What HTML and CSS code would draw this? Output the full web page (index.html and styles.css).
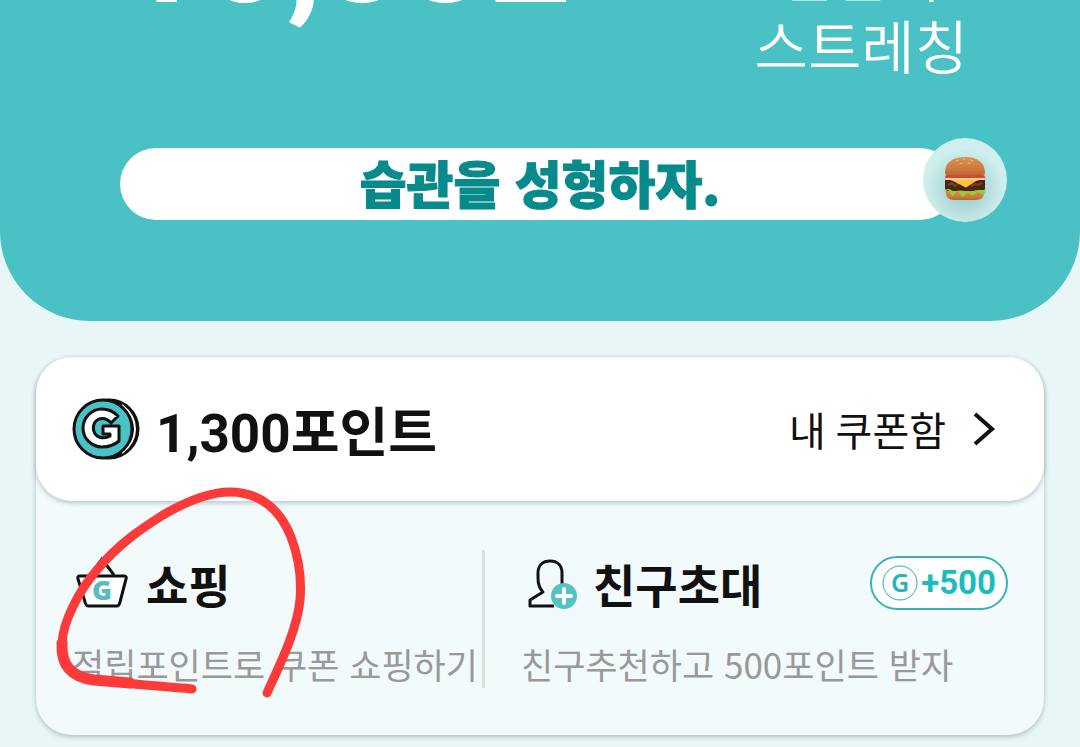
FILE: index.html
```html
<!DOCTYPE html>
<html lang="ko">
<head>
<meta charset="utf-8">
<meta name="viewport" content="width=device-width, initial-scale=1">
<title>습관을 성형하자.</title>
<link rel="stylesheet" href="styles.css">
</head>
<body>
<header class="hero">
  <div class="stats">
    <p class="count">10,332</p>
    <p class="workout">간단히<br>스트레칭</p>
  </div>
  <div class="slogan">
    <h1 class="slogan-text">습관을 성형하자.</h1>
    <span class="burger">
      <svg viewBox="0 0 42 46" width="42" height="46" aria-hidden="true">
        <defs>
          <linearGradient id="bun" x1="0" y1="0" x2="0" y2="1"><stop offset="0" stop-color="#d99055"/><stop offset=".6" stop-color="#d07c3f"/><stop offset="1" stop-color="#b96532"/></linearGradient>
        </defs>
        <path d="M2 34h38v3q0 7-8 7H10q-8 0-8-7z" fill="url(#bun)"/>
        <path d="M1 24h40v8q0 3-3 3H4q-3 0-3-3z" fill="#4b2512"/>
        <path d="M4 29l4-2 3 3 4-3M27 30l4-2 3 1 4-2" fill="none" stroke="#7c3f1d" stroke-width="2"/>
        <path d="M1 34q3-2 6 0t6 1 8 0 8 0 6-1 6 0v3q-3 2-5 0t-5 1-5 0-5 1-5-1-5 0-5-1-5 0z" fill="#8fd03c"/>
        <path d="M3 23h36l-7 2-9 6q-2 1-4-1L9 25z" fill="#ffc23b"/>
        <rect x="1" y="19" width="40" height="4" rx="2" fill="#d9472f"/>
        <path d="M2 22h38v2H2z" fill="#f4d49b"/>
        <path d="M1 17C1 6 9 1 21 1s20 5 20 16q0 2-3 2H4q-3 0-3-2z" fill="url(#bun)"/>
        <path d="M12 5l2-1M19 3h2M27 4l2 1M16 8l2-1M24 7h2" stroke="#f3c486" stroke-width="1" stroke-linecap="round"/>
      </svg>
    </span>
  </div>
</header>

<main class="card">
  <section class="points">
    <svg class="coin" viewBox="0 0 68 62" width="68" height="62" aria-hidden="true">
      <ellipse cx="37" cy="31" rx="29" ry="29" fill="#111" stroke="#111" stroke-width="3"/>
      <path d="M50 7Q63 17 63 31T50 55" fill="none" stroke="#fff" stroke-width="2"/>
      <ellipse cx="31" cy="31" rx="29" ry="29" fill="#49c1c5" stroke="#111" stroke-width="3"/>
      <path d="M46 18L39 25Q34 19 27 21A10 10 0 0 0 27 39Q33 41 38 38V36H31V28H47V43Q40 49 30 49A19 19 0 0 1 30 11Q39 11 46 18Z" fill="#fff" stroke="#111" stroke-width="3" stroke-linejoin="round"/>
    </svg>
    <strong class="balance">1,300포인트</strong>
    <a class="coupons" href="#coupons">내 쿠폰함
      <svg viewBox="0 0 24 36" width="24" height="36" aria-hidden="true"><path d="M3 3l17 15L3 33" fill="none" stroke="#111" stroke-width="4"/></svg>
    </a>
  </section>
  <nav class="menu">
    <a class="item" href="#shop">
      <span class="item-head">
        <svg viewBox="0 0 54 52" width="54" height="52" aria-hidden="true">
          <path d="M14 18L26 2l12 16" fill="none" stroke="#111" stroke-width="3"/>
          <path d="M4 19h44q3 0 2 3l-6 23q-1 4-3 4H12q-2 0-3-4L2 22q-1-3 2-3z" fill="#fff" stroke="#111" stroke-width="3"/>
          <text class="basket-letter" x="26" y="43" text-anchor="middle">G</text>
        </svg>
        <span class="item-title">쇼핑</span>
      </span>
      <span class="item-desc">적립포인트로 쿠폰 쇼핑하기</span>
    </a>
    <a class="item" href="#invite">
      <span class="item-head">
        <svg viewBox="0 0 52 52" width="52" height="52" aria-hidden="true">
          <path d="M29 49H5V43L18 35Q13 30 13 21V16C13 8 18 4 25 4S37 8 37 16V27" fill="none" stroke="#111" stroke-width="3" stroke-linejoin="round"/>
          <circle cx="39" cy="39" r="13" fill="#55c2c4"/>
          <path d="M39 32V46M32 39H46" stroke="#fff" stroke-width="4" stroke-linecap="round"/>
        </svg>
        <span class="item-title">친구초대</span>
        <span class="bonus">
          <svg viewBox="0 0 36 36" width="36" height="36" aria-hidden="true">
            <circle cx="18" cy="18" r="17" fill="none" stroke="#27afb4" stroke-width="1"/>
            <text class="badge-letter" x="18" y="27" text-anchor="middle">G</text>
          </svg>+500</span>
      </span>
      <span class="item-desc">친구추천하고 500포인트 받자</span>
    </a>
  </nav>
</main>

<svg class="scribble" viewBox="0 0 260 220" width="260" height="220" aria-hidden="true">
  <path d="M142 209C110 206 78 204 44 200C20 197 11 184 12 163C13 142 29 110 47 90C69 63 94 47 113 35C137 21 162 12 180 12C211 12 231 31 241 57C249 78 252 97 250 120C247 150 231 182 217 213" fill="none" stroke="#fd3a3a" stroke-width="9" stroke-linecap="round" stroke-linejoin="round"/>
  <path d="M12 163C11 184 20 197 44 200L80 203" fill="none" stroke="#fd3a3a" stroke-width="11" stroke-linecap="round"/>
</svg>
</body>
</html>
```
FILE: styles.css
```css
* {
  box-sizing: border-box;
}

body {
  margin: 0;
  min-height: 100vh;
  position: relative;
  overflow: hidden;
  background: #e8f6f7;
  color: #111;
  font-family: Roboto, "Noto Sans CJK KR", sans-serif;
}

h1,
p {
  margin: 0;
}

a {
  color: inherit;
  text-decoration: none;
}

svg {
  display: block;
  flex: none;
}

.hero {
  padding: 0 72px 101px 120px;
  background: #49c1c5;
  border-radius: 0 0 90px 90px;
}

/* The stats are partly scrolled past the top edge. */
.stats {
  display: flex;
  align-items: flex-end;
  justify-content: space-between;
  height: 148px;
  padding: 0 40px 68px 0;
  color: #fff;
}

.count {
  padding-bottom: 48px;
  font-size: 145px;
  font-weight: 700;
  line-height: 160px;
}

.workout {
  font-family: "Noto Sans CJK KR", sans-serif;
  font-size: 58px;
  font-weight: 350;
  line-height: 72px;
  text-align: center;
}

.slogan {
  position: relative;
  margin-right: 52px;
  height: 72px;
  border-radius: 36px;
  background: #fff;
}

.slogan-text {
  padding-left: 4px;
  color: #078a8c;
  font-family: "Noto Sans CJK KR", sans-serif;
  font-size: 51px;
  font-weight: 900;
  line-height: 68px;
  text-align: center;
  -webkit-text-stroke: 1px #078a8c;
}

.burger {
  position: absolute;
  top: -10px;
  right: -51px;
  display: grid;
  place-items: center;
  width: 84px;
  height: 84px;
  padding-bottom: 2px;
  border-radius: 50%;
  background: radial-gradient(circle at 50% 60%, #a8d2d4 20%, #ceefee 60%);
}

.card {
  margin: 36px 36px 12px;
  border-radius: 36px;
  background: #f2fafc;
  box-shadow: 0 2px 5px rgba(0, 40, 40, 0.25);
}

.points {
  display: flex;
  align-items: center;
  height: 144px;
  padding: 0 48px 0 36px;
  border-radius: 36px;
  background: #fff;
  box-shadow: 0 2px 5px rgba(0, 40, 40, 0.25);
}

.basket-letter {
  fill: #55bdc1;
  font-family: "Open Sans", sans-serif;
  font-size: 27px;
  font-weight: 800;
}

.badge-letter {
  fill: #25b5b9;
  font-family: "Noto Sans", sans-serif;
  font-size: 25px;
  font-weight: 600;
}

.balance {
  margin-left: 16px;
  font-size: 53px;
  font-weight: 700;
}

.coupons {
  display: flex;
  align-items: center;
  gap: 26px;
  margin-left: auto;
  font-size: 40px;
}

.menu {
  display: grid;
  grid-template-columns: 449fr 559fr;
  padding: 49px 0 47px;
}

.item {
  display: flex;
  flex-direction: column;
  gap: 25px;
  padding: 0 36px;
  white-space: nowrap;
}

.item:first-child {
  padding-right: 0;
  border-right: 3px solid #dcdfe0;
}

.item-head {
  display: flex;
  align-items: center;
  gap: 16px;
  height: 65px;
  padding-left: 4px;
}

.item-title {
  font-size: 46px;
  font-weight: 700;
}

.item-desc {
  color: #999;
  font-family: "Noto Sans CJK KR", sans-serif;
  font-size: 35px;
  line-height: 48px;
}

.bonus {
  display: flex;
  align-items: center;
  gap: 3px;
  height: 54px;
  margin-left: auto;
  padding: 0 10px;
  border: 2px solid #35b3b7;
  border-radius: 27px;
  background: #fff;
  color: #1bbcc0;
  font-size: 33px;
  font-weight: 700;
}

/* Freehand mark over the shopping entry. */
.scribble {
  position: absolute;
  top: 480px;
  left: 50px;
  pointer-events: none;
}
```
